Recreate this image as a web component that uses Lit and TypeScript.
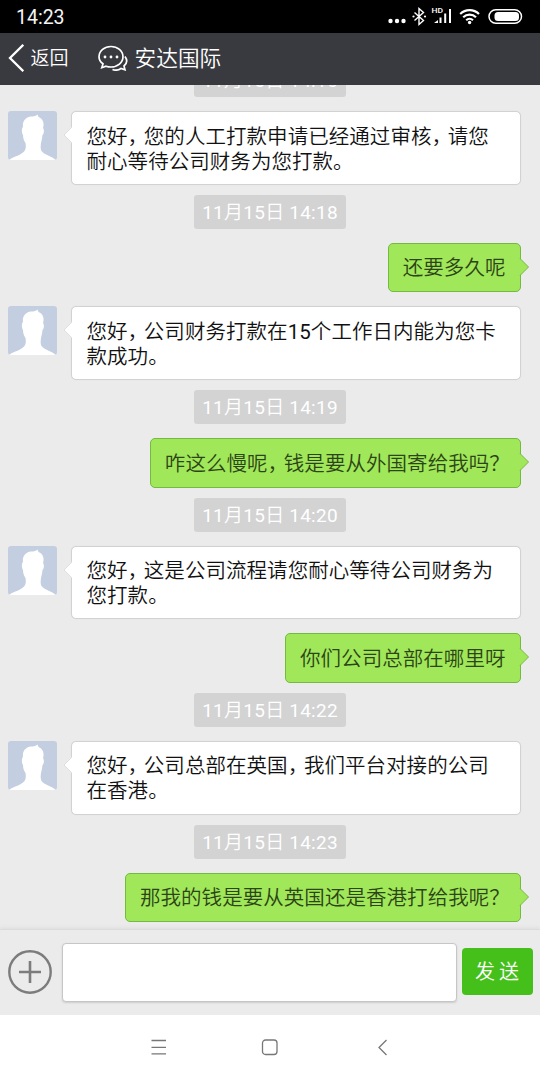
import { LitElement, html, css } from "lit";
import { customElement, property } from "lit/decorators.js";

type Item =
  | { kind: "time"; text: string }
  | { kind: "in"; lines: string[] }
  | { kind: "out"; text: string };

const items: Item[] = [
  { kind: "time", text: "11月15日 14:16" },
  { kind: "in", lines: ["您好，您的人工打款申请已经通过审核，请您", "耐心等待公司财务为您打款。"] },
  { kind: "time", text: "11月15日 14:18" },
  { kind: "out", text: "还要多久呢" },
  { kind: "in", lines: ["您好，公司财务打款在15个工作日内能为您卡", "款成功。"] },
  { kind: "time", text: "11月15日 14:19" },
  { kind: "out", text: "咋这么慢呢，钱是要从外国寄给我吗？" },
  { kind: "time", text: "11月15日 14:20" },
  { kind: "in", lines: ["您好，这是公司流程请您耐心等待公司财务为", "您打款。"] },
  { kind: "out", text: "你们公司总部在哪里呀" },
  { kind: "time", text: "11月15日 14:22" },
  { kind: "in", lines: ["您好，公司总部在英国，我们平台对接的公司", "在香港。"] },
  { kind: "time", text: "11月15日 14:23" },
  { kind: "out", text: "那我的钱是要从英国还是香港打给我呢？" },
];

const styled = (text: string) =>
  text.split(/([，？]|[0-9:]+)/).map((part) => {
    if (part === "，" || part === "？") return html`<span class="narrow">${part}</span>`;
    return /^[0-9]/.test(part) ? html`<span class="num">${part}</span>` : part;
  });

@customElement("chat-item")
export class ChatItem extends LitElement {
  @property({ attribute: false }) item!: Item;

  static styles = css`
    :host { display: flex; flex: none; }
    .time {
      margin: 0 auto; width: 152px; height: 34px; line-height: 36px; box-sizing: border-box;
      background: #d3d3d3; border-radius: 3px; color: #fff; text-align: center;
      font-size: 19px; letter-spacing: 0.25px; white-space: pre;
    }
    .in { display: flex; align-items: flex-start; gap: 14px; padding-left: 8px; }
    .avatar { width: 49px; height: 49px; display: block; border-radius: 3px; }
    .bubble {
      position: relative; box-sizing: border-box; border-radius: 5px; white-space: nowrap;
      font-size: 20.5px; line-height: 25px; letter-spacing: 0.05px;
    }
    .white {
      width: 449.5px; height: 73.75px; padding: 12.5px 14.5px; background: #fff; color: #111;
      border: 1px solid #d2d2d2; box-shadow: 0 0 1px #d8d8d8;
    }
    .green {
      margin: 0 19.5px 0 auto; height: 49.5px; padding: 12.5px 14px; background: #a0e759;
      border: 1.5px solid #74b941; color: #2c4416;
    }
    .narrow { letter-spacing: -4.3px; }
    .num { font-weight: 400; }
    .tail { position: absolute; display: block; }
    .white .tail { left: -9px; top: 14px; }
    .green .tail { right: -10px; top: 14px; }
  `;

  render() {
    const item = this.item;
    if (item.kind === "time") return html`<div class="time">${styled(item.text)}</div>`;
    if (item.kind === "out") {
      return html`<div class="bubble green">
        ${styled(item.text)}
        <svg class="tail" width="11" height="18" viewBox="0 0 11 18">
          <path d="M0 0.5H1L9.5 9L1 17.5H0Z" fill="#a0e759" />
          <path d="M1 0.5L9.5 9L1 17.5" fill="none" stroke="#74b941" />
        </svg>
      </div>`;
    }
    return html`<div class="in">
      <svg class="avatar" viewBox="0 0 49 49">
        <rect width="49" height="49" fill="#c4cee1" />
        <path fill="#fff" d="M1 49C5 45.500 13 44.500 16.500 40C18 38 18 35 17.500 32C16 30 15 27 15 24C13.500 22 13.500 17 15 16C14 10 18 6 23 5.500C26 5.500 28 5 29.500 3.500L30.500 6C35 8 36.500 12 35 17C36.500 19 36 23 34.500 24C34 28 33.500 30 33 32C32.500 36 32.500 38 33.500 40C36 44 44 45 48 49Z" />
      </svg>
      <div class="bubble white">
        ${item.lines.map((line) => html`<div>${styled(line)}</div>`)}
        <svg class="tail" width="10" height="18" viewBox="0 0 10 18">
          <path d="M10 0.500H9L1 9L9 17.500H10Z" fill="#fff" />
          <path d="M9 1L1 9L9 17" fill="none" stroke="#dedede" />
        </svg>
      </div>
    </div>`;
  }
}

@customElement("app-root")
export class AppRoot extends LitElement {
  static styles = css`
    :host {
      display: flex; flex-direction: column; width: 540px; height: 1080px; overflow: hidden;
      background: #ebebeb; font-family: Roboto, "Noto Sans CJK SC", sans-serif; font-weight: 350;
    }
    svg { display: block; flex: none; }
    .status {
      flex: none; height: 33px; background: #000; color: #f4f4f4; display: flex; align-items: center;
      justify-content: space-between; padding-left: 16px; font-size: 19.5px; line-height: 35px;
      font-weight: 400;
    }
    .clock { padding-top: 2px; }
    .hd { font: 500 8px Roboto, sans-serif; }
    .header {
      flex: none; height: 52px; background: #393a3f; color: #fff; display: flex;
      align-items: center; padding: 0 0 3px 8px; box-sizing: border-box; position: relative; z-index: 1;
    }
    .back { font-size: 19px; margin: -2px 0 0 6.5px; width: 67px; }
    .title { font-size: 21.7px; margin: -2px 0 0 7px; }
    .list {
      flex: 1; min-height: 0; overflow: hidden; display: flex; flex-direction: column;
      justify-content: flex-end; padding-bottom: 7px;
    }
    .item { margin-top: 14px; }
    .tight { margin-top: 10px; }
    .composer {
      flex: none; height: 86px; box-sizing: border-box; display: flex; align-items: center;
      padding: 0 7px 2px 8px; border-top: 1px solid #dcdcdc; background: #ebebeb;
      box-shadow: 0 -1px 4px #dcdcdc;
    }
    .field {
      width: 395px; height: 59px; box-sizing: border-box; margin: 1px 5.5px 0 9.5px; background: #fff;
      border: 1px solid #c6c6c6; border-radius: 4px; box-shadow: 0 1px 2px #ccc;
    }
    .send {
      width: 71px; height: 47px; background: #45c01a; border-radius: 4px; color: #fff;
      font-size: 20px; line-height: 48px; letter-spacing: 4px; text-indent: 3px; text-align: center;
    }
    .nav {
      flex: none; height: 65px; background: #fff; display: flex; align-items: center;
      padding: 0 0 1px 151px; box-sizing: border-box; gap: 94px;
    }
    .nav-back { margin-left: 4px; }
  `;

  render() {
    return html`
      <div class="status">
        <span class="clock">14:23</span>
        <svg width="160" height="33" viewBox="380 0 160 33" fill="none" stroke="#fff">
          <g fill="#fff" stroke="none">
            <circle cx="390.500" cy="21" r="2.200" /><circle cx="397" cy="21" r="2.200" /><circle cx="403.500" cy="21" r="2.200" />
            <circle cx="413.500" cy="16.500" r="1.100" /><circle cx="425" cy="16.500" r="1.100" />
            <text class="hd" x="431.500" y="13" textLength="11.500" lengthAdjust="spacingAndGlyphs">HD</text>
            <path d="M434 23L438 20V23Z" />
          </g>
          <path d="M414.500 12.500L423.500 20.500L419 24.500V8.500L423.500 12.500L414.500 20.500" stroke-width="1.400" />
          <path d="M440.500 23V17.500M445.200 23V13.500M450 23V9" stroke-width="2" />
          <path d="M460.200 14A13.500 13.500 0 0 1 479 14M463.200 17.200A9.300 9.300 0 0 1 476 17.200M466.200 20.200A5 5 0 0 1 473 20.200" stroke-width="2.200" />
          <circle cx="469.600" cy="22.500" r="1.700" fill="#fff" stroke="none" />
          <rect x="489" y="9.700" width="32.500" height="13.600" rx="6.800" stroke-width="1.500" />
          <rect x="494.500" y="12" width="24.500" height="9" rx="3.500" fill="#fff" stroke="none" />
        </svg>
      </div>
      <div class="header">
        <svg width="16" height="28" viewBox="0 0 16 28"><path d="M15.300 0.800L2 14L15.300 27.200" fill="none" stroke="#fff" stroke-width="2.300" /></svg>
        <span class="back">返回</span>
        <svg width="30" height="26" viewBox="97.500 44 30 26" fill="none" stroke="#fff" stroke-width="1.700">
          <path d="M101.300 66.700L102.500 62.800C99.800 61 98.500 58.500 98.500 55.800C98.500 50 104 45.500 110.500 45.500S122.500 50 122.500 55.800S117 66 110.500 66C108.500 66 107 65.700 105.500 65.200Z" />
          <path d="M124.500 55.500C127 59 126.500 62.500 123.500 65L124.500 68.800L120.500 67.500C117.500 69.500 114.500 69.500 112 68.500" />
          <g fill="#fff" stroke="none"><circle cx="104.500" cy="56" r="1.400" /><circle cx="110.500" cy="56" r="1.400" /><circle cx="116.500" cy="56" r="1.400" /></g>
        </svg>
        <span class="title">安达国际</span>
      </div>
      <div class="list">
        ${items.map((item, i) => html`<chat-item
          class=${item.kind === "time" && i > 0 ? "item tight" : "item"} .item=${item}></chat-item>`)}
      </div>
      <div class="composer">
        <svg width="44" height="44" viewBox="0 0 44 44" fill="none" stroke="#7c7c7c">
          <circle cx="22" cy="22" r="20.700" stroke-width="2.400" />
          <path d="M11 22H33M22 11V33" stroke-width="2.600" />
        </svg>
        <div class="field"></div>
        <div class="send">发送</div>
      </div>
      <div class="nav">
        <svg width="16" height="16" viewBox="0 0 16 16"><path d="M0.500 1.500H15M0.500 8.300H15M0.500 14.800H15" stroke="#777" stroke-width="1.300" /></svg>
        <svg width="18" height="17" viewBox="0 0 18 17"><rect x="1.500" y="1" width="14.500" height="14.500" rx="3" fill="none" stroke="#777" stroke-width="1.300" /></svg>
        <svg class="nav-back" width="12" height="17" viewBox="0 0 12 17"><path d="M9.500 1L2 8.500L9.500 16" fill="none" stroke="#777" stroke-width="1.300" /></svg>
      </div>
    `;
  }
}
